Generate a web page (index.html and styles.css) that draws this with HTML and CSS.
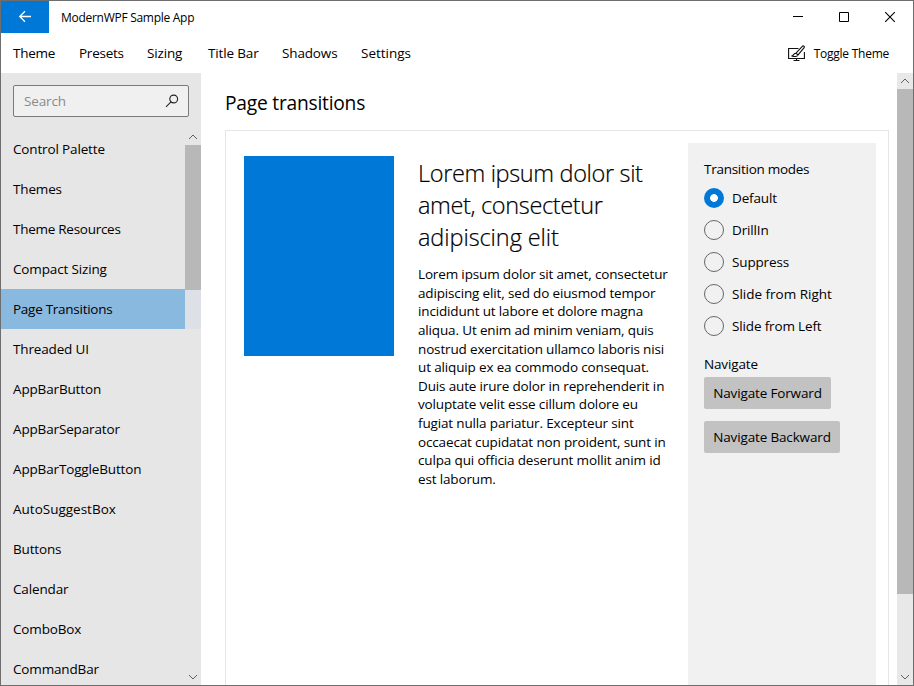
FILE: index.html
```html
<!DOCTYPE html>
<html lang="en">
<head>
<meta charset="utf-8">
<title>ModernWPF Sample App</title>
<link rel="stylesheet" href="styles.css">
</head>
<body>
<div class="window">
  <header class="titlebar">
    <button class="back" aria-label="Back"><svg width="48" height="32" viewBox="0 0 48 32"><path d="M30 15.5H18.8M24 10.2L18.7 15.5L24 20.8" fill="none" stroke="#fff" stroke-width="1.3"/></svg></button>
    <span class="title">ModernWPF Sample App</span>
    <svg class="caption" width="138" height="32" viewBox="0 0 138 32" fill="none" stroke="#000"><path d="M18 15.5H28"/><path d="M64.500 11.500H73.500V20.500H64.500Z"/><path d="M110.200 11.200L119.800 20.800M119.800 11.200L110.200 20.800" stroke-width="1.1"/></svg>
  </header>
  <nav class="menubar">
    <div class="menus"><span class="m1">Theme</span><span class="m2">Presets</span><span class="m3">Sizing</span><span class="m4">Title Bar</span><span class="m5">Shadows</span><span class="m6">Settings</span></div>
    <button class="toggle"><svg width="18" height="17" viewBox="0 0 18 17" fill="none" stroke="#111" stroke-width="1.1"><path d="M10.500 3.500H.6V13.500H16.400V7M8.500 13.500V15.500M5.500 15.500H11.500"/><path d="M8 8.200L14.300 1.300C15.300.3 17 1.700 16 2.900L10 9.900ZM8 8.200C6 8 6 10 4 11C6.500 12 9.500 11.500 10 9.900"/></svg><span>Toggle Theme</span></button>
  </nav>
  <div class="workspace">
    <aside class="sidebar">
      <div class="search"><span>Search</span><svg width="16" height="16" viewBox="0 0 16 16" fill="none" stroke="#222" stroke-width="1.1"><circle cx="9.700" cy="6" r="3.900"/><path d="M7 8.800L2 13.800"/></svg></div>
      <div class="listwrap">
        <ul class="list">
          <li>Control Palette</li><li>Themes</li><li class="tight">Theme Resources</li><li>Compact Sizing</li><li class="selected tight">Page Transitions</li><li>Threaded UI</li><li>AppBarButton</li><li>AppBarSeparator</li><li>AppBarToggleButton</li><li class="loose">AutoSuggestBox</li><li>Buttons</li><li>Calendar</li><li>ComboBox</li><li>CommandBar</li>
        </ul>
        <div class="scroll side-scroll"><svg width="16" height="16" viewBox="0 0 16 16"><path d="M4 10L8 6L12 10"/></svg><div class="thumb"></div><div class="under"></div><svg class="down" width="16" height="16" viewBox="0 0 16 16"><path d="M4 6L8 10L12 6"/></svg></div>
      </div>
    </aside>
    <main class="page">
      <h1>Page transitions</h1>
      <section class="example">
        <div class="sample">
          <div class="picture"></div>
          <article>
            <h2><span>Lorem ipsum dolor sit</span><span>amet, consectetur</span><span>adipiscing elit</span></h2>
            <p><span>Lorem ipsum dolor sit amet, consectetur</span><span>adipiscing elit, sed do eiusmod tempor</span><span>incididunt ut labore et dolore magna</span><span>aliqua. Ut enim ad minim veniam, quis</span><span>nostrud exercitation ullamco laboris nisi</span><span>ut aliquip ex ea commodo consequat.</span><span>Duis aute irure dolor in reprehenderit in</span><span>voluptate velit esse cillum dolore eu</span><span>fugiat nulla pariatur. Excepteur sint</span><span>occaecat cupidatat non proident, sunt in</span><span>culpa qui officia deserunt mollit anim id</span><span>est laborum.</span></p>
          </article>
        </div>
        <div class="options">
          <div class="label modes-label">Transition modes</div>
          <div class="radio checked"><i></i><span>Default</span></div>
          <div class="radio"><i></i><span>DrillIn</span></div>
          <div class="radio"><i></i><span>Suppress</span></div>
          <div class="radio"><i></i><span class="loose">Slide from Right</span></div>
          <div class="radio"><i></i><span>Slide from Left</span></div>
          <div class="label nav-label">Navigate</div>
          <button class="btn forward">Navigate Forward</button>
          <button class="btn backward">Navigate Backward</button>
        </div>
      </section>
    </main>
    <div class="scroll main-scroll"><svg width="16" height="16" viewBox="0 0 16 16"><path d="M4 10L8 6L12 10"/></svg><div class="thumb"></div><svg class="down" width="16" height="16" viewBox="0 0 16 16"><path d="M4 6L8 10L12 6"/></svg></div>
  </div>
</div>
</body>
</html>
```
FILE: styles.css
```css
* { box-sizing: border-box; }
body { margin: 0; font-family: "Open Sans", "Noto Sans", sans-serif; font-size: 13.5px; letter-spacing: -0.15px; color: #000; background: #fff; }
button { font: inherit; letter-spacing: inherit; color: inherit; border: 0; padding: 0; background: none; }
svg { display: block; flex: none; }
h1, h2, p, ul { margin: 0; padding: 0; list-style: none; font-weight: 400; }
.window { width: 914px; height: 686px; border: 1px solid #6e6e6e; display: flex; flex-direction: column; overflow: hidden; }
.titlebar { height: 32px; display: flex; align-items: center; flex: none; }
.back { width: 48px; height: 32px; background: #0078d7; }
.title { margin-left: 12px; font-size: 12px; letter-spacing: -0.28px; white-space: nowrap; }
.caption { margin-left: auto; }
.menubar { height: 40px; flex: none; display: flex; align-items: center; justify-content: space-between; padding: 0 24px 0 12px; }
.menus { display: flex; white-space: nowrap; }
.m1 { width: 66px; letter-spacing: -0.25px; }
.m2 { width: 68px; letter-spacing: -0.25px; }
.m3 { width: 61px; }
.m4 { width: 74px; }
.m5 { width: 79px; }
.m6 { letter-spacing: 0; }
.toggle { display: flex; align-items: center; gap: 8px; font-size: 12px; letter-spacing: -0.25px; white-space: nowrap; }
.workspace { flex: 1; display: flex; min-height: 0; }
.sidebar { width: 200px; background: #e6e6e6; display: flex; flex-direction: column; }
.search { height: 32px; flex: none; margin: 12px; border: 1px solid #7a7a7a; border-radius: 2px; background: #f0f0f0; display: flex; align-items: center; justify-content: space-between; padding: 0 8px 0 10px; color: #8a8a8a; }
.listwrap { flex: 1; min-height: 0; display: flex; }
.list { flex: 1; overflow: hidden; white-space: nowrap; }
.list li { height: 40px; line-height: 40px; padding-left: 12px; }
.list .selected { background: #8ab9e0; }
.tight { letter-spacing: -0.27px; }
.loose { letter-spacing: 0; }
.scroll { width: 16px; flex: none; display: flex; flex-direction: column; }
.scroll path { fill: none; stroke: #606060; stroke-width: 1; }
.thumb { background: #b8b8b8; }
.down { margin-top: auto; }
.side-scroll .thumb { height: 145px; }
.under { height: 39px; background: #dde0e6; }
.main-scroll { background: #e8e8e8; }
.main-scroll .thumb { height: 505px; }
.page { flex: 1; padding: 0 8px 0 24px; display: flex; flex-direction: column; }
h1 { height: 57px; line-height: 59px; font-size: 19.200px; letter-spacing: -0.22px; }
.example { flex: 1; border: 1px solid #e6e6e6; border-bottom: 0; display: flex; padding: 12px 12px 0 18px; }
.sample { display: flex; gap: 24px; width: 444px; padding-top: 13px; }
.picture { width: 150px; height: 200px; background: #0078d7; flex: none; }
article { white-space: nowrap; width: 270px; flex: none; }
article span { display: block; }
h2 { font-size: 23.500px; font-weight: 300; line-height: 32px; margin-top: 1px; letter-spacing: -0.35px; -webkit-text-stroke: 0.2px #000; }
h2 span:last-child { letter-spacing: -0.08px; }
p { line-height: 18.62px; margin-top: 12px; }
.options { width: 188px; background: #f1f1f1; padding: 17px 16px; flex: none; display: flex; flex-direction: column; align-items: flex-start; white-space: nowrap; }
.label { line-height: 19px; height: 22px; }
.modes-label { letter-spacing: -0.27px; }
.radio { height: 32px; display: flex; align-items: center; gap: 8px; }
.radio i { width: 20px; height: 20px; border: 1px solid #666; border-radius: 50%; }
.checked i { border: 0; background: radial-gradient(circle, #fff 3.500px, #0078d7 4.200px); }
.nav-label { margin-top: 13px; }
.btn { height: 32px; background: #c2c2c2; border-radius: 2px; }
.forward { width: 127px; }
.backward { width: 136px; margin-top: 12px; }
```
